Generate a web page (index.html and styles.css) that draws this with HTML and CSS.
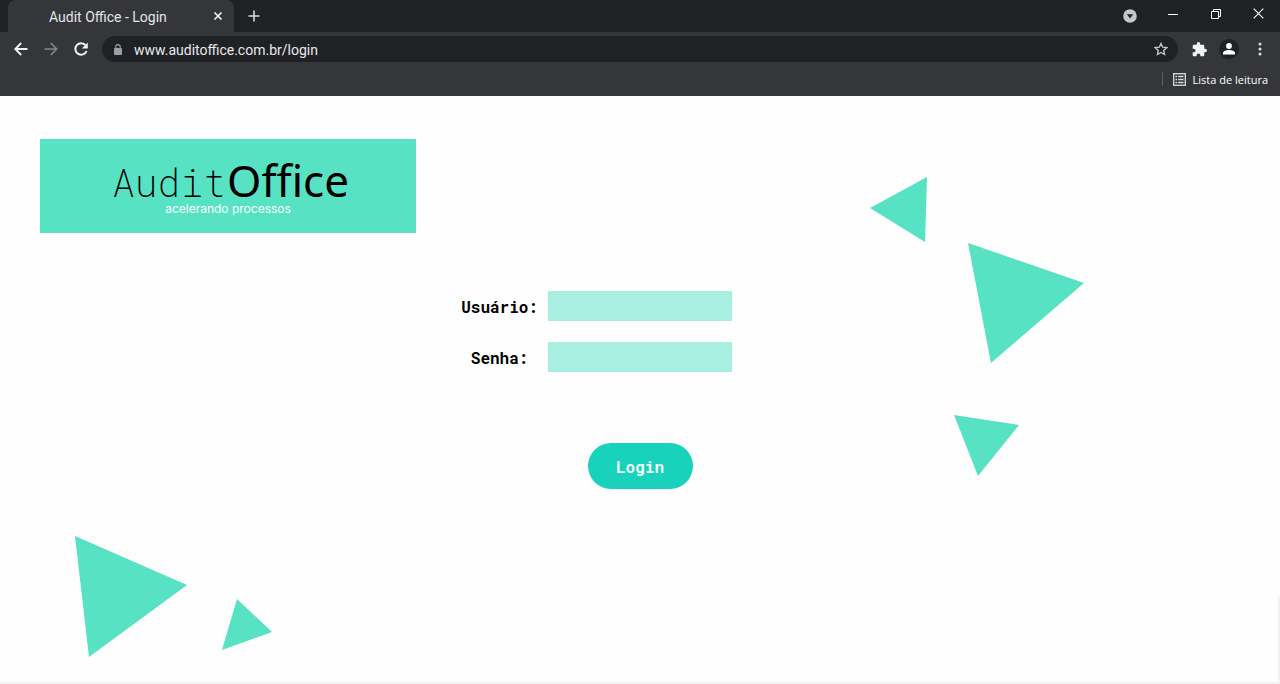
FILE: index.html
```html
<!DOCTYPE html>
<html lang="pt-BR">
<head>
<meta charset="utf-8">
<title>Audit Office - Login</title>
<link rel="stylesheet" href="styles.css">
</head>
<body>
<header class="browser">
  <div class="tab-strip">
    <div class="tab">
      <span class="tab-title">Audit Office - Login</span>
      <button class="icon-button tab-close" type="button" aria-label="Fechar guia"><svg width="10" height="10" viewBox="0 0 10 10"><path d="M1.5 1.5l7 7m0-7l-7 7" stroke="#f1f3f4" stroke-width="1.7"/></svg></button>
    </div>
    <button class="icon-button new-tab" type="button" aria-label="Nova guia"><svg width="12" height="12" viewBox="0 0 12 12"><path d="M6 .5v11M.5 6h11" stroke="#dadce0" stroke-width="1.6"/></svg></button>
    <div class="window-controls">
      <button class="icon-button" type="button" aria-label="Pesquisar guias"><svg class="tab-search" width="14" height="14" viewBox="0 0 14 14"><circle cx="7" cy="7" r="6.8" fill="#c4c7cc"/><path d="M3.8 5.2h6.4L7 9.4z" fill="#202124"/></svg></button>
      <button class="icon-button" type="button" aria-label="Minimizar"><svg width="10" height="10" viewBox="0 0 10 10"><path d="M0 5.5h10" stroke="#fff"/></svg></button>
      <button class="icon-button" type="button" aria-label="Restaurar"><svg width="10" height="10" viewBox="0 0 10 10"><path d="M.5 2.5h7v7h-7zM2.5 2.5v-2h7v7h-2" fill="none" stroke="#fff"/></svg></button>
      <button class="icon-button" type="button" aria-label="Fechar"><svg width="11" height="11" viewBox="0 0 11 11"><path d="M.7.7l9.6 9.6m0-9.6L.7 10.3" stroke="#fff" stroke-width="1.1"/></svg></button>
    </div>
  </div>
  <div class="toolbar">
    <button class="icon-button" type="button" aria-label="Voltar"><svg width="14" height="14" viewBox="0 0 14 14"><path d="M13.5 7H1.5M7.2 1L1.3 7l5.9 6" fill="none" stroke="#f1f3f4" stroke-width="1.8"/></svg></button>
    <button class="icon-button" type="button" aria-label="Avançar"><svg width="14" height="14" viewBox="0 0 14 14"><path d="M.5 7h12M6.8 1l5.9 6-5.9 6" fill="none" stroke="#85878a" stroke-width="1.6"/></svg></button>
    <button class="icon-button" type="button" aria-label="Recarregar"><svg width="14" height="14" viewBox="0 0 14 14"><path d="M11.7 3.3A5.8 5.8 0 1 0 12.6 9" fill="none" stroke="#f1f3f4" stroke-width="2"/><path d="M13.8.4v6H7.8z" fill="#f1f3f4"/></svg></button>
    <div class="address-bar">
      <svg width="8" height="11" viewBox="0 0 8 11"><rect y="4" width="8" height="7" rx="1" fill="#9aa0a6"/><path d="M1.8 4.5V2.8a2.2 2.2 0 0 1 4.4 0v1.7" fill="none" stroke="#9aa0a6" stroke-width="1.1"/></svg>
      <input class="address" type="text" aria-label="Endereço" value="www.auditoffice.com.br/login">
      <button class="icon-button" type="button" aria-label="Favoritar"><svg width="14" height="14" viewBox="0 0 14 14"><path d="M7 1.4l1.7 3.8 4.1.4-3.1 2.8.9 4.1L7 10.4l-3.6 2.1.9-4.1L1.2 5.6l4.1-.4z" fill="none" stroke="#c4c7cc" stroke-width="1.3"/></svg></button>
    </div>
    <button class="icon-button" type="button" aria-label="Extensões"><svg width="15" height="15" viewBox="1 1 22 22"><path d="M20.5 11H19V7c0-1.100-.9-2-2-2h-4V3.500a2.500 2.500 0 0 0-5 0V5H4c-1.100 0-2 .9-2 2v3.800h1.500a2.700 2.700 0 0 1 0 5.400H2V20c0 1.100.9 2 2 2h3.800v-1.500a2.700 2.700 0 0 1 5.400 0V22H17c1.100 0 2-.9 2-2v-4h1.500a2.500 2.500 0 0 0 0-5z" fill="#f1f3f4"/></svg></button>
    <button class="icon-button profile" type="button" aria-label="Perfil"><svg width="12" height="12" viewBox="0 0 12 12"><circle cx="6" cy="3" r="2.900" fill="#fff"/><path d="M0 11.500V10c0-2 3.500-3 6-3s6 1 6 3v1.500z" fill="#fff"/></svg></button>
    <button class="icon-button" type="button" aria-label="Menu"><svg width="4" height="14" viewBox="0 0 4 14"><g fill="#dadce0"><circle cx="2" cy="2" r="1.500"/><circle cx="2" cy="7" r="1.500"/><circle cx="2" cy="12" r="1.500"/></g></svg></button>
  </div>
  <div class="bookmarks">
    <button class="reading-list" type="button"><svg width="13" height="13" viewBox="0 0 13 13"><rect x=".7" y=".7" width="11.600" height="11.600" fill="none" stroke="#dadce0" stroke-width="1.300"/><path d="M2.500 3.500H4.200M5.200 3.500h5.300M2.500 6.500H4.200M5.200 6.500h5.300M2.500 9.500H4.200M5.200 9.500h5.300" stroke="#dadce0" stroke-width="1.500"/></svg>Lista de leitura</button>
  </div>
</header>
<main class="page">
  <svg class="shapes" viewBox="0 0 1280 588" aria-hidden="true">
    <g fill="#56e2c3">
      <path d="M870 112L927 81L925 146z"/>
      <path d="M968 147L1084 187L991 267z"/>
      <path d="M954 319L1019 329L978 380z"/>
      <path d="M75 440L187 489L89 561z"/>
      <path d="M237 503L272 536L222 554z"/>
    </g>
  </svg>
  <div class="logo">
    <div class="logo-name"><span class="logo-audit">Audit</span><span class="logo-office">Office</span></div>
    <div class="tagline">acelerando processos</div>
  </div>
  <form class="login">
    <label for="user">Usuário:</label>
    <input class="field" id="user" type="text">
    <label for="password">Senha:</label>
    <input class="field" id="password" type="password">
    <button class="submit" type="button">Login</button>
  </form>
  <div class="page-edge"></div>
</main>
</body>
</html>
```
FILE: styles.css
```css
* { box-sizing: border-box; }

body {
  margin: 0;
  min-height: 100vh;
  display: flex;
  flex-direction: column;
  font-family: Roboto, "Liberation Sans", sans-serif;
  background: #fefefe;
}

button, input {
  border: 0;
  padding: 0;
  margin: 0;
  font: inherit;
}

svg { display: block; }

.browser { background: #35363a; }

.icon-button {
  display: grid;
  place-items: center;
  background: none;
}

.tab-strip {
  display: flex;
  align-items: center;
  height: 32px;
  padding-left: 8px;
  background: #202124;
}

.tab {
  display: flex;
  align-items: center;
  width: 226px;
  height: 32px;
  padding: 0 11px 0 41px;
  border-radius: 8px 8px 0 0;
  background: #35363a;
  color: #e3e5e8;
  font-size: 14px;
}

.tab-title { flex: 1; padding-top: 1px; }

.new-tab { margin-left: 14px; }

.window-controls {
  display: flex;
  align-items: center;
  align-self: flex-start;
  height: 27px;
  margin-left: auto;
}

.window-controls .icon-button { width: 43px; }

.tab-search { margin-top: 4px; }

.toolbar {
  display: flex;
  align-items: center;
  gap: 16px;
  height: 34px;
  padding: 0 18px 0 14px;
}

.address-bar {
  flex: 1;
  display: flex;
  align-items: center;
  gap: 12px;
  height: 26px;
  margin: 0 -2px;
  padding: 0 10px 0 12px;
  border-radius: 13px;
  background: #202124;
}

.address {
  flex: 1;
  min-width: 0;
  height: 24px;
  padding-top: 1px;
  background: none;
  color: #e8eaed;
  font-size: 14px;
}

.profile {
  width: 20px;
  height: 20px;
  margin: 0 3px 0 -4px;
  border-radius: 50%;
  background: #202124;
}

.bookmarks {
  display: flex;
  justify-content: flex-end;
  height: 30px;
  padding: 6px 12px 0 0;
}

.reading-list {
  display: flex;
  align-items: center;
  gap: 7px;
  height: 14px;
  padding-left: 10px;
  border-left: 1px solid #5f6166;
  background: none;
  color: #fff;
  font-family: "Open Sans", "Noto Sans", sans-serif;
  font-size: 11px;
}

.page {
  position: relative;
  flex: 1;
  padding: 43px 40px 40px;
  border-bottom: 2px solid #f1f1f1;
}

.shapes {
  position: absolute;
  top: 0;
  left: 0;
  width: 100%;
}

.page-edge {
  position: absolute;
  right: 0;
  bottom: 0;
  width: 2px;
  height: 86px;
  background: #f3f3f3;
}

.logo {
  position: relative;
  width: 376px;
  height: 94px;
  padding-top: 20px;
  background: #56e2c3;
  text-align: center;
}

.logo-name {
  display: flex;
  justify-content: center;
  align-items: baseline;
  gap: 1px;
  height: 42px;
  padding-left: 5px;
  line-height: 42px;
  color: #000;
}

.logo-audit {
  font-family: "Roboto Mono", "Liberation Mono", monospace;
  font-size: 38px;
  font-weight: 200;
}

.logo-office {
  font-family: "Noto Sans", "Open Sans", sans-serif;
  font-size: 44px;
  font-variant-ligatures: none;
}

.tagline {
  color: #fff;
  font-family: Inter, sans-serif;
  font-size: 12px;
  line-height: 16px;
}

.login {
  position: relative;
  display: grid;
  grid-template-columns: 1fr 184px 1fr;
  align-items: center;
  gap: 21px 10px;
  margin-top: 58px;
  color: #000;
  font-family: "Roboto Mono", "DejaVu Sans Mono", monospace;
  font-size: 16px;
  font-weight: 700;
}

.login label {
  grid-column: 1;
  justify-self: end;
  width: 8ch;
  text-align: center;
}

.field {
  grid-column: 2;
  width: 100%;
  height: 30px;
  padding: 0 8px;
  background: #a9efe1;
}

.submit {
  grid-column: 2;
  justify-self: center;
  width: 105px;
  height: 46px;
  margin-top: 50px;
  border-radius: 23px;
  background: #18d2bc;
  color: #f0fffc;
}
```
